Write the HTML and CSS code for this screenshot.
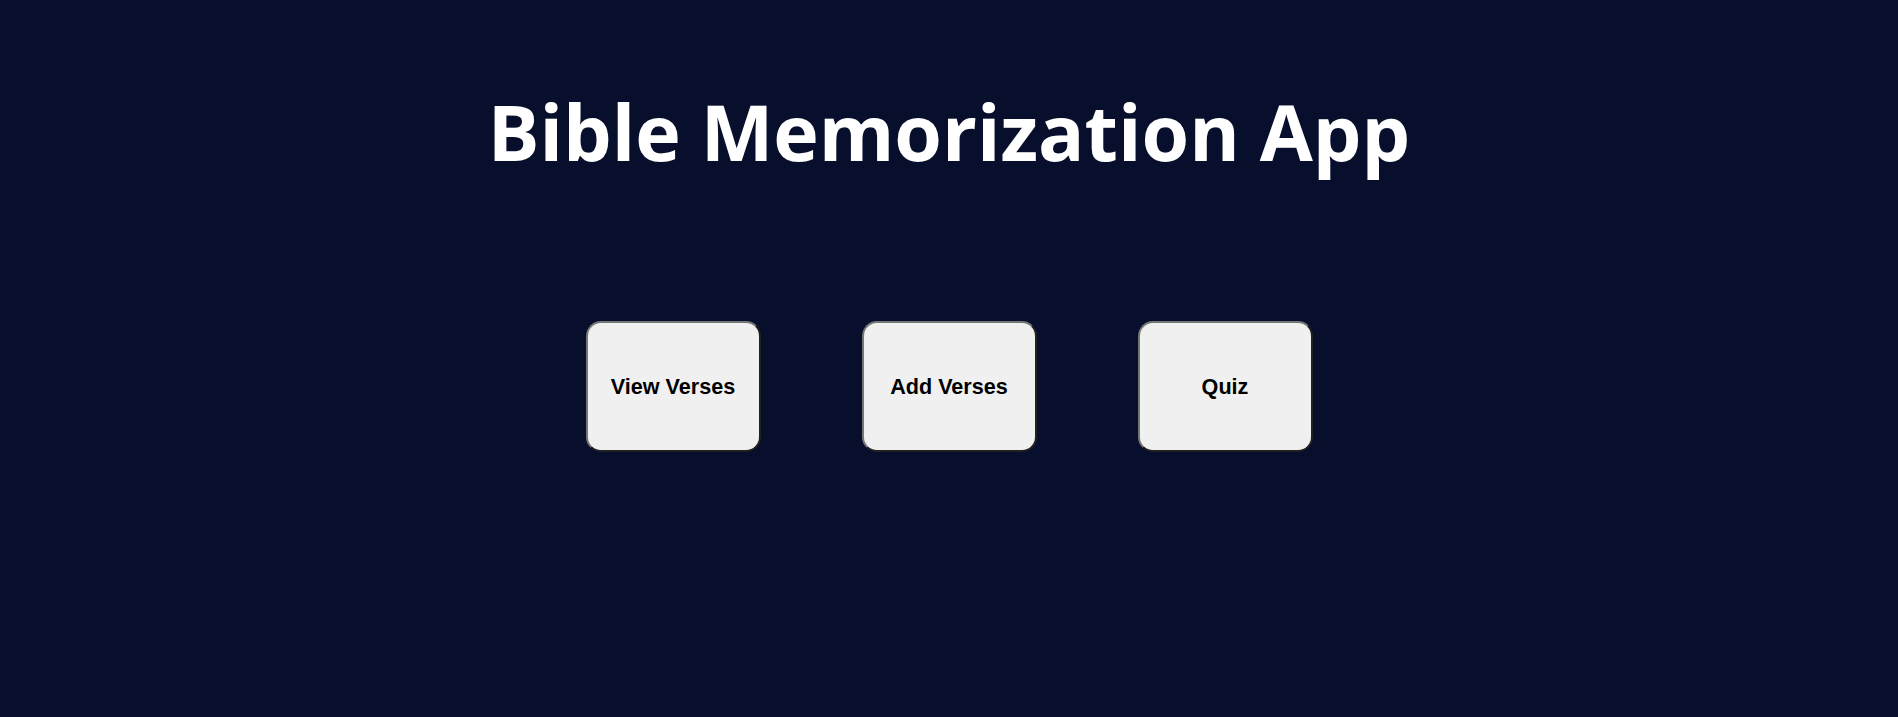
FILE: index.html
```html
<!DOCTYPE html>
<html lang="en">
<head>
<meta charset="utf-8">
<title>Bible Memorization App</title>
<link rel="stylesheet" href="styles.css">
</head>
<body>
<main class="app">
  <h1 class="app-title">Bible Memorization App</h1>
  <nav class="menu">
    <button class="menu-btn" type="button">View Verses</button>
    <button class="menu-btn" type="button">Add Verses</button>
    <button class="menu-btn" type="button">Quiz</button>
  </nav>
</main>
</body>
</html>
```
FILE: styles.css
```css
html, body {
  margin: 0;
  padding: 0;
  height: 100%;
}
body {
  background: #080f2c;
  color: #ffffff;
  font-family: "Open Sans", "Noto Sans", sans-serif;
}
.app {
  display: flex;
  flex-direction: column;
  align-items: center;
  padding-top: 85px;
}
.app-title {
  margin: 0;
  font-size: 77px;
  font-weight: 700;
  line-height: 94px;
  letter-spacing: 0;
}
.menu {
  display: flex;
  gap: 101px;
  margin-top: 142px;
}
.menu-btn {
  box-sizing: border-box;
  width: 175px;
  height: 131px;
  background: #f0f0f0;
  border: 2px outset #767676;
  border-radius: 15px;
  font-family: "Liberation Sans", Arial, sans-serif;
  font-weight: 700;
  font-size: 21.6px;
  color: #000;
  padding: 0;
}
```
